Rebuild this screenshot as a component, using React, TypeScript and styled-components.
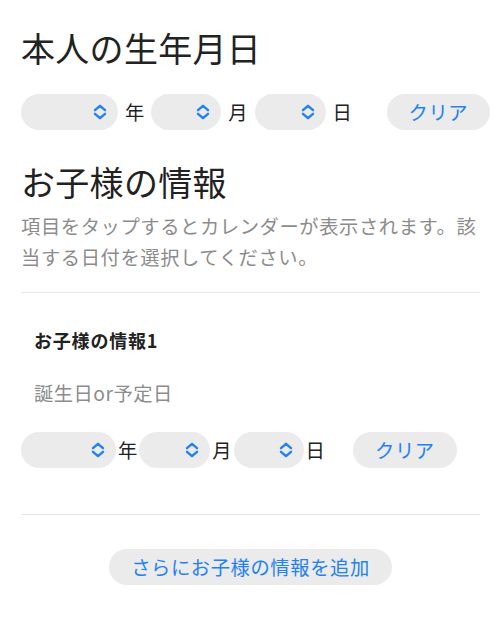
import React from "react";
import styled, { createGlobalStyle } from "styled-components";

const GlobalStyle = createGlobalStyle`
  html, body {
    margin: 0;
    padding: 0;
    background: #fff;
  }
  body {
    font-family: "Noto Sans CJK JP", "Noto Sans", sans-serif;
    color: #222;
  }
`;

const Page = styled.div`
  width: 500px;
  box-sizing: border-box;
  padding: 28px 20px 40px 21px;
`;

const Title = styled.h1<{ $top?: number }>`
  margin: ${(p) => p.$top ?? 0}px 0 0;
  font-size: 34px;
  line-height: 40.8px;
  font-weight: 400;
  letter-spacing: 0.3px;
  color: #222;
`;

const Description = styled.p`
  margin: 8px -2px 0 0;
  font-size: 19.3px;
  line-height: 31px;
  letter-spacing: 0.6px;
  color: #8c8c8c;
`;

const Divider = styled.hr<{ $top: number }>`
  margin: ${(p) => p.$top}px 0 0;
  border: none;
  height: 1px;
  background: #e6e6e6;
`;

const DateRow = styled.div<{ $top: number }>`
  display: flex;
  align-items: center;
  margin-top: ${(p) => p.$top}px;
  height: 36px;
`;

const Picker = styled.button<{ $width: number }>`
  display: flex;
  flex-shrink: 0;
  align-items: center;
  justify-content: flex-end;
  box-sizing: border-box;
  width: ${(p) => p.$width}px;
  height: 36px;
  padding: 0 11px 0 0;
  border: none;
  border-radius: 18px;
  background: #ebebeb;
  cursor: pointer;
`;

const Unit = styled.span<{ $space: number }>`
  flex-shrink: 0;
  padding: 0 ${(p) => p.$space}px;
  font-size: 19.3px;
  line-height: 36px;
  color: #222;
`;

const PillButton = styled.button<{ $width: number; $left?: number }>`
  flex-shrink: 0;
  box-sizing: border-box;
  width: ${(p) => p.$width}px;
  height: 36px;
  margin-left: ${(p) => p.$left ?? 0}px;
  padding: 0;
  border: none;
  border-radius: 18px;
  background: #ebebeb;
  font-family: "Noto Sans CJK JP", "Noto Sans", sans-serif;
  font-size: 19.3px;
  letter-spacing: 0.6px;
  color: #2281f4;
  cursor: pointer;
`;

const ChildLabel = styled.div`
  margin-top: 34px;
  padding-left: 13px;
  font-size: 18px;
  line-height: 27px;
  font-weight: 700;
  letter-spacing: 0.8px;
  color: #222;
`;

const ChildHint = styled.div`
  margin-top: 26px;
  padding-left: 13px;
  font-size: 19.3px;
  line-height: 27px;
  letter-spacing: 0.5px;
  color: #8c8c8c;
`;

const Footer = styled.div`
  display: flex;
  justify-content: center;
  margin-top: 34px;
`;

const Chevrons = () => (
  <svg width="14" height="16" viewBox="0 0 14 16" fill="none">
    <path
      d="M2 6.2 L7 1.8 L12 6.2 M2 9.8 L7 14.2 L12 9.8"
      stroke="#2281f4"
      strokeWidth="2.4"
      strokeLinecap="round"
      strokeLinejoin="round"
    />
  </svg>
);

type RowProps = {
  top: number;
  widths: [number, number, number];
  space: number;
  clearLeft: number;
  clearWidth: number;
};

const DateFields = ({ top, widths, space, clearLeft, clearWidth }: RowProps) => {
  const units = ["年", "月", "日"];
  return (
    <DateRow $top={top}>
      {units.map((u, i) => (
        <React.Fragment key={u}>
          <Picker $width={widths[i]}>
            <Chevrons />
          </Picker>
          <Unit $space={space}>{u}</Unit>
        </React.Fragment>
      ))}
      <PillButton $width={clearWidth} $left={clearLeft}>
        クリア
      </PillButton>
    </DateRow>
  );
};

export default function App() {
  return (
    <>
      <GlobalStyle />
      <Page>
        <Title>本人の生年月日</Title>
        <DateFields top={25} widths={[97, 70, 71]} space={7} clearLeft={28} clearWidth={103} />

        <Title $top={32}>お子様の情報</Title>
        <Description>
          項目をタップするとカレンダーが表示されます。該当する日付を選択してください。
        </Description>
        <Divider $top={19} />

        <ChildLabel>お子様の情報1</ChildLabel>
        <ChildHint>誕生日or予定日</ChildHint>
        <DateFields top={25} widths={[95, 71, 70]} space={2} clearLeft={26} clearWidth={104} />
        <Divider $top={46} />

        <Footer>
          <PillButton $width={283}>さらにお子様の情報を追加</PillButton>
        </Footer>
      </Page>
    </>
  );
}
